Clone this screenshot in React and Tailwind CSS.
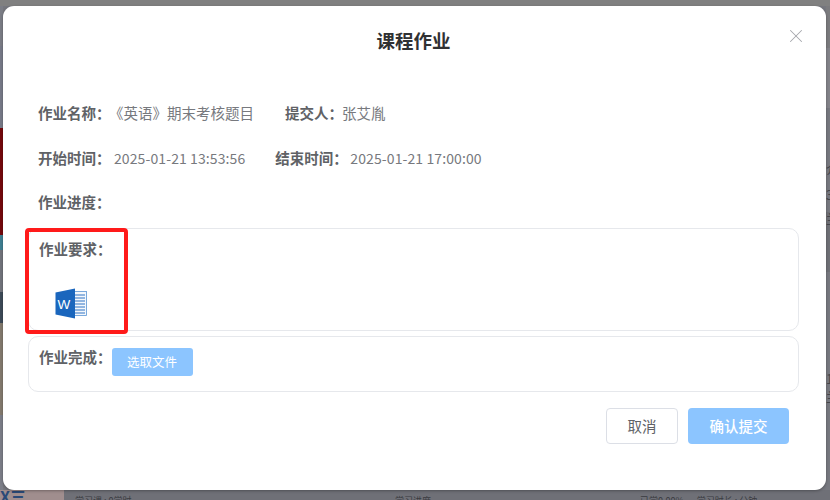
import { X } from "lucide-react"

const fontStack = "font-['Noto_Sans_CJK_SC','Noto_Sans',sans-serif]"

function Backdrop() {
    return (
        <div className="flex h-full w-full flex-col bg-[#76777e]">
            <div className="h-[6px] bg-[#808080]" />
            <div className="flex min-h-0 flex-1 justify-between">
                <div className="flex w-[3px] flex-col">
                    <div className="h-[40px] bg-[#7b7d86]" />
                    <div className="h-[82px] bg-[#777a88]" />
                    <div className="h-[107px] bg-[#75080c]" />
                    <div className="h-[15px] bg-[#3f7f92]" />
                    <div className="h-[42px] bg-[#72747c]" />
                    <div className="h-[31px] bg-[#3d4a58]" />
                    <div className="h-[92px] bg-[#837a6e]" />
                    <div className="flex-1 bg-[#7c7e88]" />
                </div>
                <div className="flex w-[4px] flex-col overflow-hidden text-[13px] leading-[14px] text-[#44464c]">
                    <div className="h-[42px] shrink-0 bg-[#7b7b7e]" />
                    <div className="h-[60px] shrink-0 bg-[#838389]" />
                    <div className="h-[54px] shrink-0 bg-[#77787f]" />
                    <div className="h-[26px] shrink-0 bg-[#77787f]">介</div>
                    <div className="h-[24px] shrink-0 bg-[#77787f]">3</div>
                    <div className="h-[60px] shrink-0 bg-[#6f7076]">兰</div>
                    <div className="h-[100px] shrink-0 bg-[#77787f]" />
                    <div className="h-[18px] shrink-0 bg-[#77787f]">1</div>
                    <div className="flex-1 bg-[#77787f]">兰</div>
                </div>
            </div>
            <div className="flex h-[10px] items-start overflow-hidden bg-[#6f7077] text-[9px] leading-[14px] text-[#3b3c42]">
                <div className="h-full w-[64px] shrink-0 overflow-hidden bg-[#a08e8e] text-[16px] font-bold leading-[13px] text-[#2a4a78]">X三</div>
                <div className="ml-[11px] mt-[4px] w-[320px] shrink-0">学习课 : 0学时</div>
                <div className="mt-[4px] w-[245px] shrink-0">学习进度</div>
                <div className="mt-[4px] shrink-0">已学0.00% · 学习时长 : 分钟</div>
            </div>
        </div>
    )
}

function InfoRow({ children }) {
    return <div className="mb-[24.5px] flex h-5 items-center leading-5">{children}</div>
}

function Label({ children }) {
    return <span className="font-bold text-[#606266]">{children}</span>
}

function Value({ className, children }) {
    return <span className={`whitespace-nowrap text-[#77797e] ${className}`}>{children}</span>
}

function WordIcon() {
    return (
        <svg width="33" height="31" viewBox="0 0 33 31" className="block">
            <rect x="18" y="3.5" width="13.5" height="24" fill="#f4f8fc" stroke="#5b94d4" strokeWidth="0.8" />
            <path d="M20 7h10M20 10h10M20 13h10M20 16h10M20 19h10M20 22h10M20 25h10" stroke="#2f73c4" strokeWidth="1.1" />
            <path d="M0.5 4.5 20 0.5V30.5L0.5 26.5Z" fill="#1a66bd" />
            <text x="2.5" y="20.5" fill="#fff" fontSize="13.5" fontFamily="Liberation Sans, sans-serif">W</text>
        </svg>
    )
}

export default function App() {
    return (
        <div className={`relative h-[500px] w-[830px] overflow-hidden text-[14.5px] ${fontStack}`}>
            <Backdrop />

            {/* modal */}
            <div className="absolute left-[3px] top-[6px] flex h-[484px] w-[823px] flex-col rounded-[11px] bg-white pl-[25px] pr-[27px] shadow-[0_1px_3px_rgba(0,0,0,0.3)]">
                <div className="relative flex h-[70px] shrink-0 items-center justify-center pb-[1px]">
                    <h2 className="text-[18.5px] font-bold text-[#303133]">课程作业</h2>
                    <X className="absolute right-[-8px] top-[19px] h-[22px] w-[22px] text-[#a5a7ac]" strokeWidth={1.1} />
                </div>

                <div className="mt-[27px] pl-[10px]">
                    <InfoRow>
                        <Label>作业名称：</Label>
                        <Value className="ml-[-1.5px]">《英语》期末考核题目</Value>
                        <span className="ml-[31px]"><Label>提交人：</Label></span>
                        <Value className="ml-[-1px]">张艾胤</Value>
                    </InfoRow>
                    <InfoRow>
                        <Label>开始时间：</Label>
                        <Value className="ml-[3.5px] text-sm tracking-[0.1px]">2025-01-21 13:53:56</Value>
                        <span className="ml-[30px]"><Label>结束时间：</Label></span>
                        <Value className="ml-[2.5px] text-sm tracking-[0.1px]">2025-01-21 17:00:00</Value>
                    </InfoRow>
                    <InfoRow>
                        <Label>作业进度：</Label>
                    </InfoRow>
                </div>

                <div className="mt-[-8.5px] h-[103px] rounded-[10px] border border-[#e6e8ec] pl-[10px] pt-[10px]">
                    <div className="h-5 leading-5"><Label>作业要求：</Label></div>
                    <div className="ml-[16px] mt-[29px]"><WordIcon /></div>
                </div>

                <div className="mt-[5px] flex h-[56px] items-start rounded-[10px] border border-[#e6e8ec] pl-[10px] pt-[10px]">
                    <div className="h-5 leading-5"><Label>作业完成：</Label></div>
                    <button className="mt-[1px] h-[28px] w-[81px] rounded-[3px] bg-[#8cc5ff] text-[12.5px] text-white">选取文件</button>
                </div>

                <div className="mt-[16px] flex justify-end gap-[10px] pr-[10px]">
                    <button className="h-[36px] w-[72px] rounded-[4px] border border-[#dcdfe6] bg-white text-[#606266]">取消</button>
                    <button className="h-[36px] w-[101px] rounded-[4px] bg-[#8cc5ff] font-medium text-white">确认提交</button>
                </div>
            </div>

            {/* red annotation box */}
            <div className="absolute left-[25px] top-[228px] h-[106px] w-[103px] rounded-[4px] border-[4px] border-[#ff1a1a]" />
        </div>
    )
}
